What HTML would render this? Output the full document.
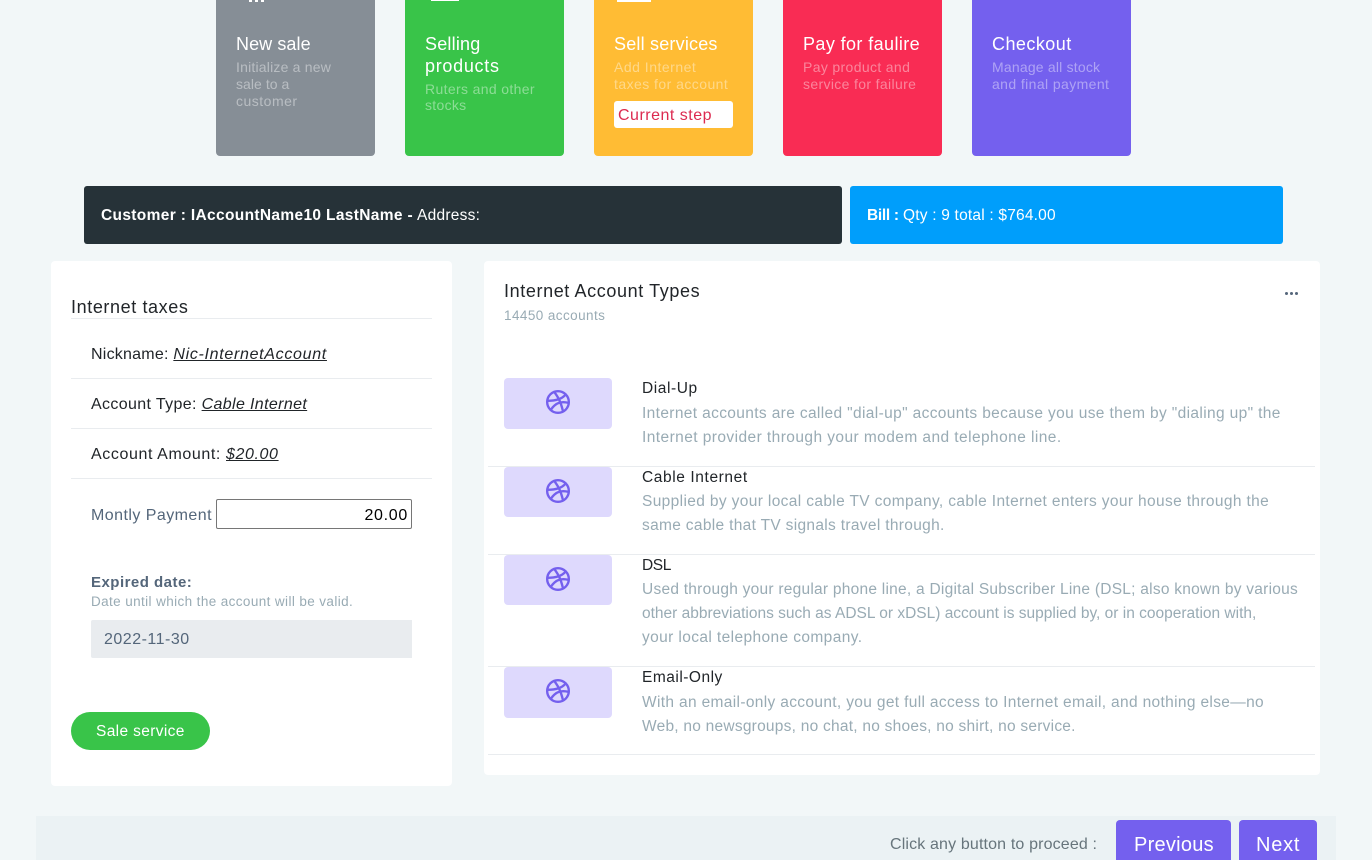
<!DOCTYPE html>
<html lang="en">
<head>
<meta charset="utf-8">
<title>Internet taxes</title>
<style>
html,body{margin:0;padding:0;width:1372px;height:860px;overflow:hidden;background:#f2f7f8;font-family:"Liberation Sans",sans-serif}
#w{position:relative;width:1372px;height:860px;overflow:hidden;background:#f2f7f8}
.b{position:absolute}
.t{position:absolute;white-space:nowrap;line-height:20px;font-size:15.5px}
.card{position:absolute;top:-10px;width:159px;height:166px;border-radius:4px}
.h{font-size:18px;color:#fff}
.s{font-size:14px;color:rgba(255,255,255,.42)}
.d{color:#99abb4}
.k{color:#212529}
.hr{position:absolute;height:1px;background:#e9ecef}
.ib{position:absolute;left:504px;width:108px;border-radius:4px;background:#ded9fd}
.ib svg{position:absolute;left:41px;top:11px}
i{text-decoration:underline}
</style>
</head>
<body>
<div id="w">
<div class="card" style="left:216px;background:#868e96"></div>
<div class="card" style="left:405px;background:#39c449"></div>
<div class="card" style="left:594px;background:#ffbc34"></div>
<div class="card" style="left:783px;background:#f92c54"></div>
<div class="card" style="left:972px;background:#7460ee"></div>
<div class="b" style="left:249px;top:0;width:3px;height:2px;background:#fff"></div>
<div class="b" style="left:255px;top:0;width:3px;height:2px;background:#fff"></div>
<div class="b" style="left:261px;top:0;width:3px;height:2px;background:#fff"></div>
<div class="b" style="left:431px;top:0;width:28px;height:1px;background:#fff"></div>
<div class="b" style="left:617px;top:0;width:34px;height:2px;background:#fff"></div>

<div class="t h" style="left:236px;top:34px;letter-spacing:.08px">New sale</div>
<div class="t s" style="left:236px;top:57px;letter-spacing:.2px">Initialize a new</div>
<div class="t s" style="left:236px;top:74px;letter-spacing:.05px">sale to a</div>
<div class="t s" style="left:236px;top:91px;letter-spacing:.5px">customer</div>

<div class="t h" style="left:425px;top:34px;letter-spacing:.2px">Selling</div>
<div class="t h" style="left:425px;top:56px;letter-spacing:.7px">products</div>
<div class="t s" style="left:425px;top:79px;letter-spacing:.35px">Ruters and other</div>
<div class="t s" style="left:425px;top:95px;letter-spacing:.3px">stocks</div>

<div class="t h" style="left:614px;top:34px;letter-spacing:.2px">Sell services</div>
<div class="t s" style="left:614px;top:57px;letter-spacing:.5px">Add Internet</div>
<div class="t s" style="left:614px;top:74px;letter-spacing:.45px">taxes for account</div>
<div class="b" style="left:614px;top:101px;width:119px;height:27px;background:#fff;border-radius:3px"></div>
<div class="t" style="left:618px;top:106px;font-size:16px;color:#dc2a50;letter-spacing:.5px">Current step</div>

<div class="t h" style="left:803px;top:34px;letter-spacing:.4px">Pay for faulire</div>
<div class="t s" style="left:803px;top:57px;letter-spacing:.35px">Pay product and</div>
<div class="t s" style="left:803px;top:74px;letter-spacing:.35px">service for failure</div>

<div class="t h" style="left:992px;top:34px;letter-spacing:.45px">Checkout</div>
<div class="t s" style="left:992px;top:57px;letter-spacing:.2px">Manage all stock</div>
<div class="t s" style="left:992px;top:74px;letter-spacing:.4px">and final payment</div>

<div class="b" style="left:84px;top:186px;width:758px;height:58px;background:#263238;border-radius:3px"></div>
<div class="t" style="left:101px;top:206px;color:#fff;font-weight:bold;letter-spacing:.34px">Customer : IAccountName10 LastName -</div>
<div class="t" style="left:417px;top:206px;color:#fff;letter-spacing:.25px">Address:</div>
<div class="b" style="left:850px;top:186px;width:433px;height:58px;background:#009efb;border-radius:3px"></div>
<div class="t" style="left:867px;top:206px;color:#fff;font-weight:bold;letter-spacing:-.3px">Bill :</div>
<div class="t" style="left:903px;top:206px;color:#fff;letter-spacing:.2px">Qty : 9 total : $764.00</div>

<div class="b" style="left:51px;top:261px;width:401px;height:525px;background:#fff;border-radius:4px"></div>
<div class="t k" style="left:71px;top:297px;font-size:18px;letter-spacing:.6px">Internet taxes</div>
<div class="hr" style="left:71px;top:318px;width:361px"></div>
<div class="t k" style="left:91px;top:345px;font-size:16px;letter-spacing:.23px">Nickname: <i style="letter-spacing:.69px">Nic-InternetAccount</i></div>
<div class="hr" style="left:71px;top:378px;width:361px"></div>
<div class="t k" style="left:91px;top:395px;font-size:16px;letter-spacing:.36px">Account Type: <i>Cable Internet</i></div>
<div class="hr" style="left:71px;top:428px;width:361px"></div>
<div class="t k" style="left:91px;top:445px;font-size:16px;letter-spacing:.6px">Account Amount: <i>$20.00</i></div>
<div class="hr" style="left:71px;top:478px;width:361px"></div>
<div class="t" style="left:91px;top:506px;font-size:16px;color:#54667a;letter-spacing:.45px">Montly Payment</div>
<div class="b" style="left:216px;top:499px;width:194px;height:28px;border:1px solid #767676;border-radius:2px;background:#fff"></div>
<div class="t" style="right:964px;top:506px;font-size:16px;color:#000;letter-spacing:.7px">20.00</div>
<div class="t" style="left:91px;top:573px;font-size:15px;color:#54667a;font-weight:bold;letter-spacing:.48px">Expired date:</div>
<div class="t" style="left:91px;top:592px;font-size:13.5px;color:#99abb4;letter-spacing:.39px">Date until which the account will be valid.</div>
<div class="b" style="left:91px;top:620px;width:321px;height:38px;background:#e9ecef;border-radius:2px 0 0 2px"></div>
<div class="t" style="left:104px;top:630px;font-size:16px;color:#54667a;letter-spacing:.5px">2022-11-30</div>
<div class="b" style="left:71px;top:712px;width:139px;height:38px;background:#39c449;border-radius:19px"></div>
<div class="t" style="left:96px;top:722px;color:#fff;letter-spacing:.36px">Sale service</div>

<div class="b" style="left:484px;top:261px;width:836px;height:514px;background:#fff;border-radius:4px"></div>
<div class="t k" style="left:504px;top:281px;font-size:18px;letter-spacing:.61px">Internet Account Types</div>
<div class="t" style="left:504px;top:306px;font-size:13.5px;color:#99abb4;letter-spacing:.43px">14450 accounts</div>
<div class="b" style="left:1285px;top:292px;width:3px;height:3px;border-radius:50%;background:#54667a"></div>
<div class="b" style="left:1290px;top:292px;width:3px;height:3px;border-radius:50%;background:#54667a"></div>
<div class="b" style="left:1295px;top:292px;width:3px;height:3px;border-radius:50%;background:#54667a"></div>

<div class="ib" style="top:378px;height:51px"><svg width="26" height="26" viewBox="0 0 24 24" fill="none" stroke="#7460ee" stroke-width="2.2" stroke-linecap="round" stroke-linejoin="round"><circle cx="12" cy="12" r="10"/><path d="M8.56 2.75c4.37 6 6 9.42 8.03 17.72m2.54-15.38c-3.72 4.35-8.94 5.66-16.88 5.85m19.5 1.9c-3.5-.93-6.63-.82-8.94 0-2.58.92-5.01 2.86-7.44 6.32"/></svg></div>
<div class="t k" style="left:642px;top:379px;letter-spacing:.58px">Dial-Up</div>
<div class="t d" style="left:642px;top:404px;letter-spacing:.36px">Internet accounts are called "dial-up" accounts because you use them by "dialing up" the</div>
<div class="t d" style="left:642px;top:428px;letter-spacing:.43px">Internet provider through your modem and telephone line.</div>
<div class="hr" style="left:488px;top:466px;width:827px"></div>

<div class="ib" style="top:467px;height:50px"><svg width="26" height="26" viewBox="0 0 24 24" fill="none" stroke="#7460ee" stroke-width="2.2" stroke-linecap="round" stroke-linejoin="round"><circle cx="12" cy="12" r="10"/><path d="M8.56 2.75c4.37 6 6 9.42 8.03 17.72m2.54-15.38c-3.72 4.35-8.94 5.66-16.88 5.85m19.5 1.9c-3.5-.93-6.63-.82-8.94 0-2.58.92-5.01 2.86-7.44 6.32"/></svg></div>
<div class="t k" style="left:642px;top:468px;letter-spacing:.6px">Cable Internet</div>
<div class="t d" style="left:642px;top:492px;letter-spacing:.36px">Supplied by your local cable TV company, cable Internet enters your house through the</div>
<div class="t d" style="left:642px;top:516px;letter-spacing:.32px">same cable that TV signals travel through.</div>
<div class="hr" style="left:488px;top:554px;width:827px"></div>

<div class="ib" style="top:555px;height:50px"><svg width="26" height="26" viewBox="0 0 24 24" fill="none" stroke="#7460ee" stroke-width="2.2" stroke-linecap="round" stroke-linejoin="round"><circle cx="12" cy="12" r="10"/><path d="M8.56 2.75c4.37 6 6 9.42 8.03 17.72m2.54-15.38c-3.72 4.35-8.94 5.66-16.88 5.85m19.5 1.9c-3.5-.93-6.63-.82-8.94 0-2.58.92-5.01 2.86-7.44 6.32"/></svg></div>
<div class="t k" style="left:642px;top:556px;letter-spacing:-.4px">DSL</div>
<div class="t d" style="left:642px;top:580px;letter-spacing:.25px">Used through your regular phone line, a Digital Subscriber Line (DSL; also known by various</div>
<div class="t d" style="left:642px;top:604px;letter-spacing:0">other abbreviations such as ADSL or xDSL) account is supplied by, or in cooperation with,</div>
<div class="t d" style="left:642px;top:628px;letter-spacing:.39px">your local telephone company.</div>
<div class="hr" style="left:488px;top:666px;width:827px"></div>

<div class="ib" style="top:667px;height:51px"><svg width="26" height="26" viewBox="0 0 24 24" fill="none" stroke="#7460ee" stroke-width="2.2" stroke-linecap="round" stroke-linejoin="round"><circle cx="12" cy="12" r="10"/><path d="M8.56 2.75c4.37 6 6 9.42 8.03 17.72m2.54-15.38c-3.72 4.35-8.94 5.66-16.88 5.85m19.5 1.9c-3.5-.93-6.63-.82-8.94 0-2.58.92-5.01 2.86-7.44 6.32"/></svg></div>
<div class="t k" style="left:642px;top:668px;letter-spacing:.5px">Email-Only</div>
<div class="t d" style="left:642px;top:693px;letter-spacing:.34px">With an email-only account, you get full access to Internet email, and nothing else—no</div>
<div class="t d" style="left:642px;top:717px;letter-spacing:.24px">Web, no newsgroups, no chat, no shoes, no shirt, no service.</div>
<div class="hr" style="left:488px;top:754px;width:827px"></div>

<div class="b" style="left:36px;top:816px;width:1300px;height:44px;background:#ebf2f4"></div>
<div class="t" style="left:890px;top:835px;font-size:16px;color:#67757c;letter-spacing:.15px">Click any button to proceed :</div>
<div class="b" style="left:1116px;top:820px;width:115px;height:40px;background:#7460ee;border-radius:4px 4px 0 0"></div>
<div class="t" style="left:1134px;top:835px;font-size:20px;color:#fff;letter-spacing:.25px">Previous</div>
<div class="b" style="left:1239px;top:820px;width:78px;height:40px;background:#7460ee;border-radius:4px 4px 0 0"></div>
<div class="t" style="left:1256px;top:835px;font-size:20px;color:#fff;letter-spacing:.75px">Next</div>
</div>
</body>
</html>
